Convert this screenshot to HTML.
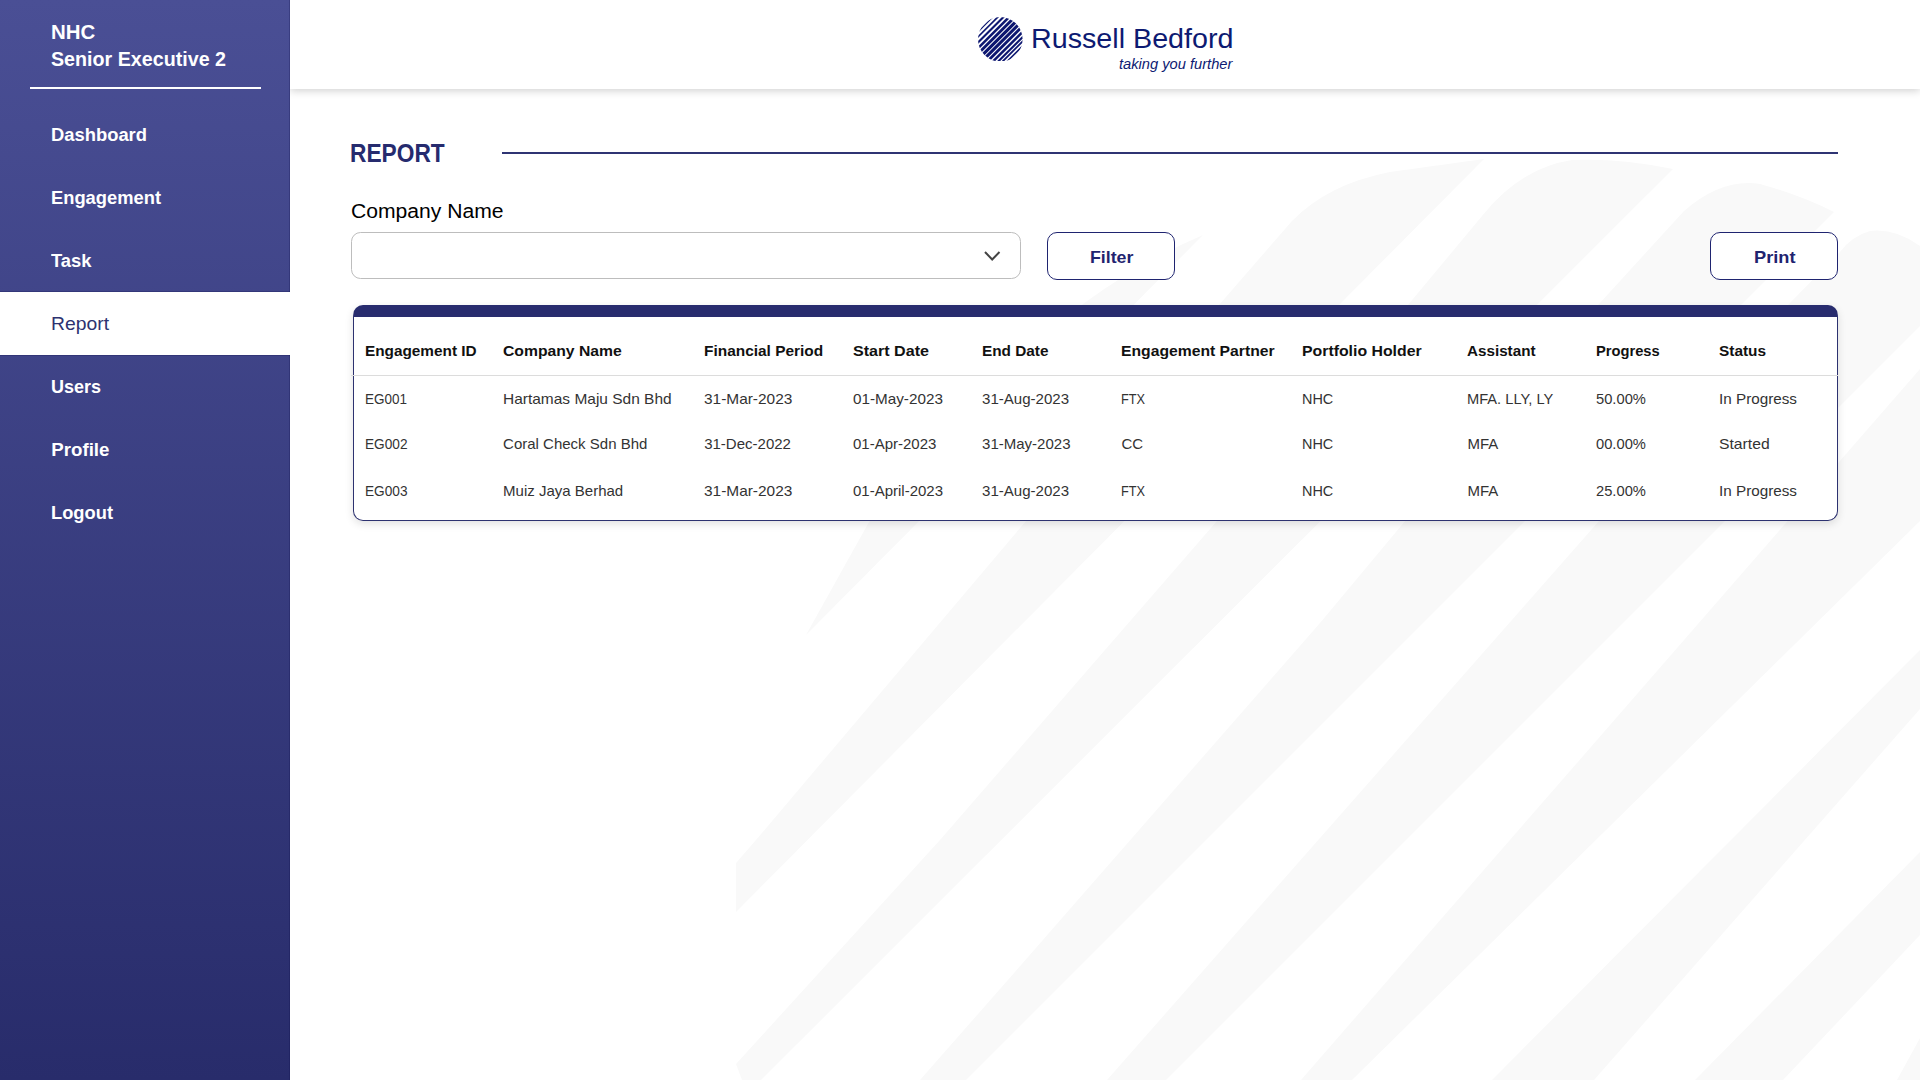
<!DOCTYPE html>
<html><head><meta charset="utf-8"><title>Report</title>
<style>
html,body{margin:0;padding:0;}
body{width:1920px;height:1080px;position:relative;overflow:hidden;background:#fff;font-family:"Liberation Sans",sans-serif;}
.t{position:absolute;white-space:nowrap;line-height:1;transform-origin:0 0;}
.a{position:absolute;box-sizing:border-box;}
#side{left:0;top:0;width:290px;height:1080px;background:linear-gradient(180deg,#4a4f95 0%,#282c6b 100%);}
#hdr{left:290px;top:0;width:1630px;height:89px;background:#fff;box-shadow:0 2px 8px rgba(0,0,0,0.18);}
.btn{border:1.5px solid #1f2470;border-radius:10px;background:#fff;}
#tbl{left:353px;top:305px;width:1485px;height:216px;border:1px solid #2d3270;border-top:12px solid #282c6e;border-radius:10px 10px 10px 10px;background:#fff;box-shadow:0 3px 8px rgba(0,0,0,0.12);}

</style></head><body>
<svg class="a" style="left:0;top:0" width="1920" height="1080">
 <g fill="#f9f9f9">
  <path d="M1203,235 L806,635 L869,522 L1083,304 Q1140,262 1203,235 Z"/>
  <path d="M1484,159 L736,912 L736,863 L756,840 L1026,521 L1219,305 L1292,221 Q1328,184 1390,172 Z"/>
  <path d="M1673,169 L761,1080 L742,1080 L736,1064 L940,840 L1217,521 L1408,305 L1482,216 Q1520,168 1572,160 Q1620,158 1673,169 Z"/>
  <path d="M1834,212 L966,1080 L920,1080 L1000,989 L1320,623 L1406,520 L1599,304 L1684,211 Q1722,178 1760,184 Q1800,195 1834,212 Z"/>
  <path d="M1920,246 Q1895,228 1870,231 Q1852,236 1840,252 L1789,304 L1599,521 L1320,838 L1107,1080 L1166,1080 L1920,326 Z"/>
  <polygon points="1920,369 1920,521 1352,1080 1301,1080"/>
  <polygon points="1920,650 1920,709 1594,1080 1492,1080"/>
  <polygon points="1920,852 1920,935 1783,1080 1695,1080"/>
  <polygon points="1920,1038 1920,1080 1897,1080"/>
 </g>
</svg>
<div class="a" id="hdr"></div>
<div class="a" id="side"></div>
<div class="a" style="left:30px;top:86.5px;width:231px;height:2px;background:#fff"></div>
<div class="a" style="left:289px;top:0;width:1px;height:1080px;background:rgba(10,10,70,0.25)"></div>
<div class="a" style="left:0;top:291px;width:290px;height:1px;background:rgba(10,10,70,0.25)"></div>
<div class="a" style="left:0;top:355px;width:290px;height:1px;background:rgba(10,10,70,0.25)"></div>
<div class="a" style="left:0;top:292px;width:290px;height:63px;background:#fff"></div>
<svg class="a" style="left:978.1px;top:16.7px" width="44.6" height="44.6" viewBox="0 0 44.6 44.6">
 <defs><clipPath id="lc"><circle cx="22.3" cy="22.3" r="22.3"/></clipPath></defs>
 <g clip-path="url(#lc)" stroke="#0c1670" transform="rotate(-45 22.3 22.3)">
  <line x1="-10" x2="55" y1="1.30" y2="1.30" stroke-width="1.1"/>
  <line x1="-10" x2="55" y1="4.80" y2="4.80" stroke-width="1.7"/>
  <line x1="-10" x2="55" y1="8.80" y2="8.80" stroke-width="2.1"/>
  <line x1="-10" x2="55" y1="12.80" y2="12.80" stroke-width="2.5"/>
  <line x1="-10" x2="55" y1="16.80" y2="16.80" stroke-width="2.9"/>
  <line x1="-10" x2="55" y1="20.80" y2="20.80" stroke-width="3.1"/>
  <line x1="-10" x2="55" y1="24.80" y2="24.80" stroke-width="3.1"/>
  <line x1="-10" x2="55" y1="28.80" y2="28.80" stroke-width="2.8"/>
  <line x1="-10" x2="55" y1="32.80" y2="32.80" stroke-width="2.5"/>
  <line x1="-10" x2="55" y1="36.50" y2="36.50" stroke-width="2.1"/>
  <line x1="-10" x2="55" y1="39.60" y2="39.60" stroke-width="1.8"/>
  <line x1="-10" x2="55" y1="42.80" y2="42.80" stroke-width="1.5"/>
 </g>
</svg>
<div class="a" style="left:502px;top:151.5px;width:1336px;height:2px;background:#2f3473"></div>
<div class="a" style="left:351px;top:232px;width:670px;height:47px;border:1px solid #bdbdbd;border-radius:9.5px;background:#fff"></div>
<svg class="a" style="left:980px;top:245px" width="25" height="20"><polyline points="5,7 12.2,14.5 19.5,7" fill="none" stroke="#444" stroke-width="2"/></svg>
<div class="a btn" style="left:1047px;top:232px;width:128px;height:48px"></div>
<div class="a btn" style="left:1710px;top:232px;width:128px;height:48px"></div>
<div class="a" id="tbl"></div>
<div class="a" style="left:351px;top:375px;width:1487px;height:1px;background:#dcdcdc"></div>

<div class="t" style="left:51.4px;top:22.17px;font-size:20px;font-weight:bold;color:#fff;transform:scaleX(1.0221);">NHC</div>
<div class="t" style="left:51.4px;top:48.87px;font-size:20px;font-weight:bold;color:#fff;transform:scaleX(0.9838);">Senior Executive 2</div>
<div class="t" style="left:51.3px;top:125.87px;font-size:18.7px;font-weight:bold;color:#fff;transform:scaleX(0.9835);">Dashboard</div>
<div class="t" style="left:51.3px;top:188.87px;font-size:18.7px;font-weight:bold;color:#fff;transform:scaleX(0.9808);">Engagement</div>
<div class="t" style="left:51.3px;top:251.87px;font-size:18.7px;font-weight:bold;color:#fff;transform:scaleX(0.9826);">Task</div>
<div class="t" style="left:51.3px;top:313.92px;font-size:19px;color:#2d3270;transform:scaleX(1.0170);">Report</div>
<div class="t" style="left:51.3px;top:377.87px;font-size:18.7px;font-weight:bold;color:#fff;transform:scaleX(0.9624);">Users</div>
<div class="t" style="left:51.3px;top:440.87px;font-size:18.7px;font-weight:bold;color:#fff;">Profile</div>
<div class="t" style="left:51.3px;top:503.87px;font-size:18.7px;font-weight:bold;color:#fff;transform:scaleX(0.9793);">Logout</div>
<div class="t" style="left:1030.8px;top:24.90px;font-size:28px;color:#0d1a72;transform:scaleX(1.0245);">Russell Bedford</div>
<div class="t" style="left:1118.6px;top:56.05px;font-size:15px;font-style:italic;color:#0d1a72;transform:scaleX(0.9784);">taking you further</div>
<div class="t" style="left:350.3px;top:140.94px;font-size:25px;font-weight:bold;color:#262b6e;transform:scaleX(0.9089);">REPORT</div>
<div class="t" style="left:351.0px;top:201.17px;font-size:20px;color:#000;transform:scaleX(1.0559);">Company Name</div>
<div class="t" style="left:1090.0px;top:248.81px;font-size:17px;font-weight:bold;color:#1f2470;transform:scaleX(1.0442);">Filter</div>
<div class="t" style="left:1753.6px;top:249.01px;font-size:17px;font-weight:bold;color:#1f2470;transform:scaleX(1.0714);">Print</div>
<div class="t" style="left:364.8px;top:343.10px;font-size:15px;font-weight:bold;color:#111;transform:scaleX(1.0221);">Engagement ID</div>
<div class="t" style="left:503.1px;top:343.10px;font-size:15px;font-weight:bold;color:#111;transform:scaleX(1.0479);">Company Name</div>
<div class="t" style="left:704.2px;top:343.10px;font-size:15px;font-weight:bold;color:#111;transform:scaleX(1.0287);">Financial Period</div>
<div class="t" style="left:853.0px;top:343.10px;font-size:15px;font-weight:bold;color:#111;transform:scaleX(1.0725);">Start Date</div>
<div class="t" style="left:982.1px;top:343.10px;font-size:15px;font-weight:bold;color:#111;transform:scaleX(1.0228);">End Date</div>
<div class="t" style="left:1121.4px;top:343.10px;font-size:15px;font-weight:bold;color:#111;transform:scaleX(1.0469);">Engagement Partner</div>
<div class="t" style="left:1302.3px;top:343.10px;font-size:15px;font-weight:bold;color:#111;transform:scaleX(1.0553);">Portfolio Holder</div>
<div class="t" style="left:1467.4px;top:343.10px;font-size:15px;font-weight:bold;color:#111;transform:scaleX(1.0143);">Assistant</div>
<div class="t" style="left:1596.4px;top:343.10px;font-size:15px;font-weight:bold;color:#111;transform:scaleX(0.9793);">Progress</div>
<div class="t" style="left:1719.2px;top:343.10px;font-size:15px;font-weight:bold;color:#111;transform:scaleX(1.0274);">Status</div>
<div class="t" style="left:364.8px;top:391.10px;font-size:15px;color:#333;transform:scaleX(0.8993);">EG001</div>
<div class="t" style="left:503.1px;top:391.10px;font-size:15px;color:#333;transform:scaleX(1.0317);">Hartamas Maju Sdn Bhd</div>
<div class="t" style="left:704.2px;top:391.10px;font-size:15px;color:#333;transform:scaleX(1.0281);">31-Mar-2023</div>
<div class="t" style="left:853.0px;top:391.10px;font-size:15px;color:#333;transform:scaleX(1.0171);">01-May-2023</div>
<div class="t" style="left:982.1px;top:391.10px;font-size:15px;color:#333;transform:scaleX(1.0042);">31-Aug-2023</div>
<div class="t" style="left:1121.4px;top:391.10px;font-size:15px;color:#333;transform:scaleX(0.8503);">FTX</div>
<div class="t" style="left:1302.3px;top:391.10px;font-size:15px;color:#333;transform:scaleX(0.9631);">NHC</div>
<div class="t" style="left:1467.4px;top:391.10px;font-size:15px;color:#333;transform:scaleX(0.9763);">MFA. LLY, LY</div>
<div class="t" style="left:1596.4px;top:391.10px;font-size:15px;color:#333;transform:scaleX(0.9808);">50.00%</div>
<div class="t" style="left:1719.2px;top:391.10px;font-size:15px;color:#333;transform:scaleX(1.0169);">In Progress</div>
<div class="t" style="left:364.8px;top:436.00px;font-size:15px;color:#333;transform:scaleX(0.9100);">EG002</div>
<div class="t" style="left:503.1px;top:436.00px;font-size:15px;color:#333;">Coral Check Sdn Bhd</div>
<div class="t" style="left:704.2px;top:436.00px;font-size:15px;color:#333;">31-Dec-2022</div>
<div class="t" style="left:853.0px;top:436.00px;font-size:15px;color:#333;">01-Apr-2023</div>
<div class="t" style="left:982.1px;top:436.00px;font-size:15px;color:#333;">31-May-2023</div>
<div class="t" style="left:1121.4px;top:436.00px;font-size:15px;color:#333;">CC</div>
<div class="t" style="left:1302.3px;top:436.00px;font-size:15px;color:#333;transform:scaleX(0.9631);">NHC</div>
<div class="t" style="left:1467.4px;top:436.00px;font-size:15px;color:#333;">MFA</div>
<div class="t" style="left:1596.4px;top:436.00px;font-size:15px;color:#333;transform:scaleX(0.9808);">00.00%</div>
<div class="t" style="left:1719.2px;top:436.00px;font-size:15px;color:#333;transform:scaleX(1.0481);">Started</div>
<div class="t" style="left:364.8px;top:483.40px;font-size:15px;color:#333;transform:scaleX(0.9100);">EG003</div>
<div class="t" style="left:503.1px;top:483.40px;font-size:15px;color:#333;">Muiz Jaya Berhad</div>
<div class="t" style="left:704.2px;top:483.40px;font-size:15px;color:#333;transform:scaleX(1.0281);">31-Mar-2023</div>
<div class="t" style="left:853.0px;top:483.40px;font-size:15px;color:#333;">01-April-2023</div>
<div class="t" style="left:982.1px;top:483.40px;font-size:15px;color:#333;transform:scaleX(1.0042);">31-Aug-2023</div>
<div class="t" style="left:1121.4px;top:483.40px;font-size:15px;color:#333;transform:scaleX(0.8503);">FTX</div>
<div class="t" style="left:1302.3px;top:483.40px;font-size:15px;color:#333;transform:scaleX(0.9631);">NHC</div>
<div class="t" style="left:1467.4px;top:483.40px;font-size:15px;color:#333;">MFA</div>
<div class="t" style="left:1596.4px;top:483.40px;font-size:15px;color:#333;transform:scaleX(0.9808);">25.00%</div>
<div class="t" style="left:1719.2px;top:483.40px;font-size:15px;color:#333;transform:scaleX(1.0169);">In Progress</div>
</body></html>
